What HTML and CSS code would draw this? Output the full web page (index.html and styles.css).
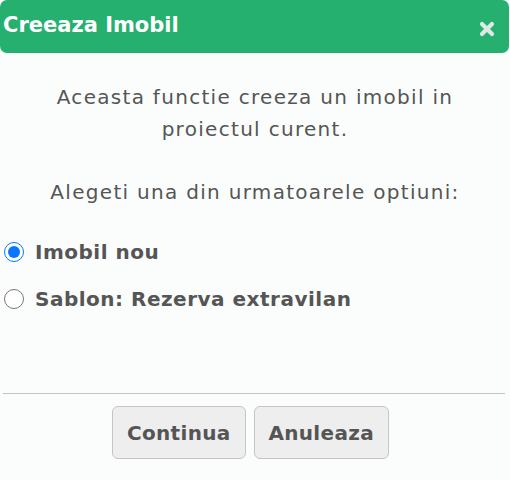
FILE: index.html
```html
<!DOCTYPE html>
<html>
<head>
<meta charset="utf-8">
<link rel="stylesheet" href="styles.css">
</head>
<body>
<div class="dialog">
  <div class="titlebar">
    <span class="title">Creeaza Imobil</span>
    <span class="close" aria-label="close">
      <svg width="16" height="16" viewBox="0 0 16 16"><path d="M3 3 L13 13 M13 3 L3 13" stroke="#dfe9e4" stroke-width="4.2" stroke-linecap="round"/></svg>
    </span>
  </div>
  <div class="content">
    <p class="intro">Aceasta functie creeza un imobil in<br>proiectul curent.</p>
    <p class="intro">Alegeti una din urmatoarele optiuni:</p>
    <label class="option"><input type="radio" name="opt" checked> Imobil nou</label>
    <label class="option"><input type="radio" name="opt"> Sablon: Rezerva extravilan</label>
  </div>
  <div class="buttons">
    <button class="btn">Continua</button>
    <button class="btn">Anuleaza</button>
  </div>
</div>
</body>
</html>
```
FILE: styles.css
```css
html, body {
  margin: 0;
  padding: 0;
  background: #fbfdfc;
}
body {
  font-family: "DejaVu Sans", Verdana, sans-serif;
  color: #555;
  width: 510px;
  height: 480px;
}
.dialog {
  display: flex;
  flex-direction: column;
  height: 480px;
}
.titlebar {
  background: #25b06f;
  height: 53px;
  width: 509px;
  border-radius: 7px;
  display: flex;
  align-items: center;
  justify-content: space-between;
  box-sizing: border-box;
  padding: 0 14px 0 3px;
}
.title {
  color: #fff;
  font-weight: bold;
  font-size: 21px;
  position: relative;
  top: -2px;
}
.close {
  display: flex;
  width: 16px;
  height: 16px;
  position: relative;
  top: 2px;
}
.content {
  padding: 0 4px;
  height: 340px;
  box-sizing: border-box;
}
.intro {
  text-align: center;
  font-size: 20px;
  line-height: 32px;
  margin: 28px 0 0;
  letter-spacing: 1.3px;
}
.intro + .intro {
  margin-top: 31px;
}
.option {
  display: flex;
  align-items: center;
  font-weight: bold;
  font-size: 20px;
  letter-spacing: 0.5px;
  height: 24px;
}
.intro + .option {
  margin-top: 32px;
}
.option + .option {
  margin-top: 23px;
}
.option input {
  width: 20px;
  height: 20px;
  margin: 0 11px 0 0;
  accent-color: #0a75ff;
}
.buttons {
  border-top: 1px solid #c2c2c2;
  margin: 0 5px 0 3px;
  display: flex;
  justify-content: center;
  gap: 8px;
  padding: 12px 7px 0 0;
}
.btn {
  font-family: "DejaVu Sans", Verdana, sans-serif;
  font-weight: bold;
  font-size: 20px;
  color: #555;
  background: #eeeeee;
  border: 1px solid #c5c5c5;
  border-radius: 6px;
  height: 53px;
  padding: 0 14px;
  letter-spacing: 0.3px;
}
```
